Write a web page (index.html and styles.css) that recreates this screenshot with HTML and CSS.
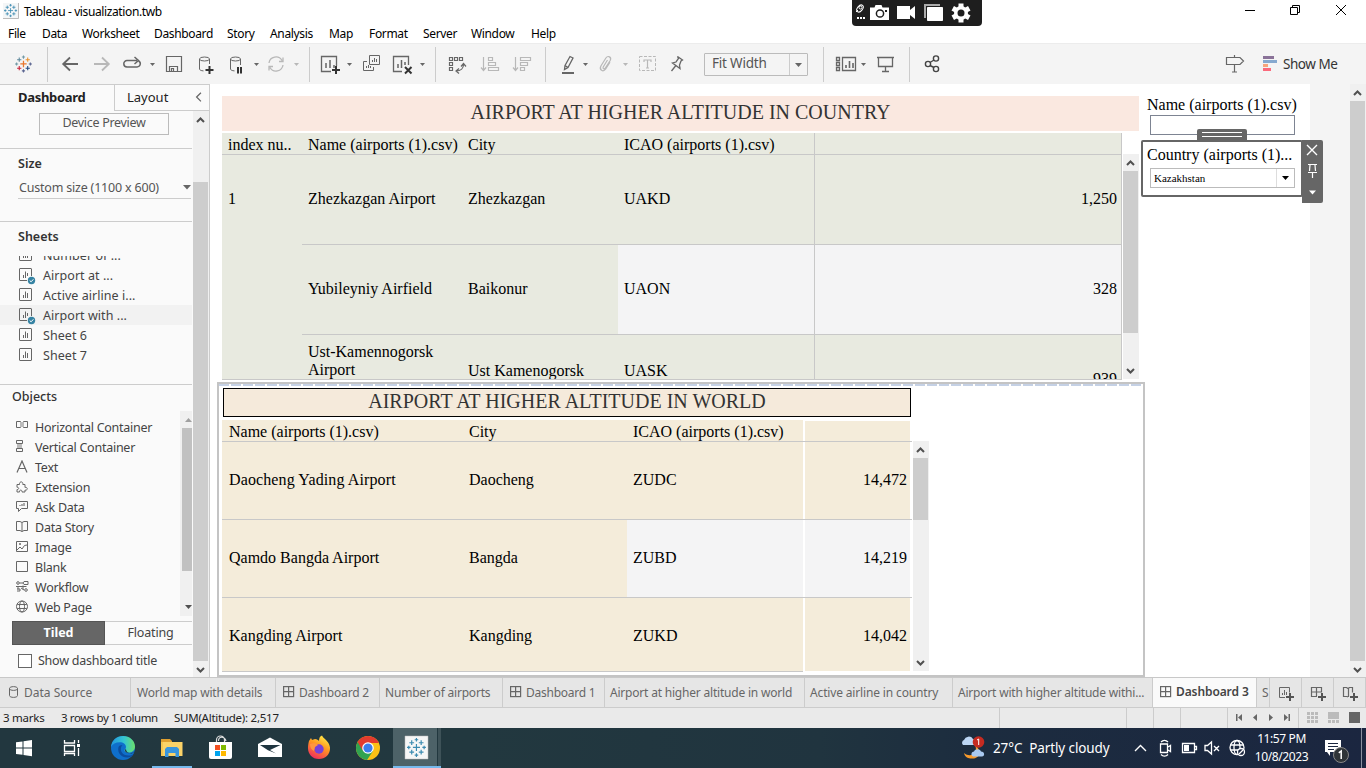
FILE: index.html
```html
<!DOCTYPE html>
<html lang="en">
<head>
<meta charset="utf-8">
<title>Tableau - visualization.twb</title>
<link rel="stylesheet" href="styles.css">
</head>
<body>
<svg class="defs" width="0" height="0">
  <defs>
    <g id="logo" fill="none">
      <path stroke="#e8762d" stroke-width="1.200" d="M8 5v6M5 8h6"/>
      <path stroke="#c72037" d="M4 10v4M2 12h4"/>
      <path stroke="#5b879b" d="M4 2v4M2 4h4"/>
      <path stroke="#eb912c" d="M12 2v4M10 4h4"/>
      <path stroke="#1f457e" d="M12 10v4M10 12h4"/>
      <path stroke="#7199a6" d="M8 0v3M6.500 1.500h3M1.500 6.500v3M0 8h3"/>
      <path stroke="#5b6591" d="M8 13v3M6.500 14.500h3M14.500 6.500v3M13 8h3"/>
    </g>
    <g id="logo-blue" fill="none" stroke="#3b8ab0">
      <path d="M8 5v6M5 8h6M4 10v4M2 12h4M4 2v4M2 4h4M12 2v4M10 4h4M12 10v4M10 12h4M8 0v3M6.500 1.500h3M1.500 6.500v3M0 8h3M8 13v3M6.500 14.500h3M14.500 6.500v3M13 8h3"/>
    </g>
    <path id="caret" d="M0 0h5l-2.500 3z"/>
    <g id="sheet" fill="none" stroke="#666"><rect x=".5" y=".5" width="12" height="12" rx=".5"/><path d="M4.500 10V7M6.500 10V3.500M8.500 10V5"/></g>
    <g id="placed"><path fill="none" stroke="#666" d="M8 12.500H1a.5.5 0 0 1-.5-.5V1a.5.5 0 0 1 .5-.5h11a.5.5 0 0 1 .5.5v7M4.500 10V7M6.500 10V3.500M8.500 8V5"/><circle cx="12.500" cy="12.500" r="3.700" fill="#3583a3"/><path d="M10.700 12.500l1.400 1.300 2.300-2.500" fill="none" stroke="#fff"/></g>
    <g id="grid" fill="none" stroke="#666" stroke-width="1.200"><rect x=".6" y=".6" width="10" height="10"/><path d="M5.600 0v11M0 5.600h11"/></g>
    <path id="up" fill="none" stroke="#505050" stroke-width="2" d="M4 10l3.500-3.500L11 10"/>
    <path id="down" fill="none" stroke="#505050" stroke-width="2" d="M4 6l3.500 3.500L11 6"/>
  </defs>
</svg>

<header class="titlebar">
  <svg width="16" height="16" viewBox="0 0 16 16"><path fill="#f4f6f7" d="M0 0h16v16H0z"/><path d="M15.500 0v15.500H0" fill="none" stroke="#bbb"/><g transform="translate(1 1) scale(.82)"><use href="#logo-blue"/></g></svg>
  <span class="app-name">Tableau - visualization.twb</span>
  <div class="recorder">
    <svg width="130" height="26" viewBox="852 0 130 26">
      <g fill="none" stroke="#fff"><ellipse cx="860" cy="8.500" rx="4" ry="2.500" transform="rotate(-50 860 8.500)"/><circle cx="860.500" cy="7.500" r="1.500"/><path d="M856 12l2-2"/></g>
      <path fill="#fff" d="M857 17h2v2h-2zM860 17h2v2h-2zM863 17h2v2h-2z"/>
      <path fill="#fff" d="M870 7.500h4.500l1-2.500h6l1 2.500h6.500V20h-19z"/><circle cx="880" cy="13.500" r="3.600" fill="#fff" stroke="#1e1e1e" stroke-width="1.500"/><path d="M885 10h2v2h-2z" fill="#1e1e1e"/>
      <path fill="#fff" d="M897 6h13v4l5-4v13l-5-4v4h-13z"/>
      <path fill="#aaa" d="M924 4h16v2h-14v12h-2z"/><path fill="#fff" stroke="#fff" d="M927.500 7.500h15v13h-15z"/>
      <g fill="#fff"><circle cx="961" cy="13" r="7"/><path d="M958.500 3.500h5v19h-5z"/><path d="M958.500 3.500h5v19h-5z" transform="rotate(60 961 13)"/><path d="M958.500 3.500h5v19h-5z" transform="rotate(120 961 13)"/></g><circle cx="961" cy="13" r="3.500" fill="#1e1e1e"/>
    </svg>
  </div>
  <svg class="window-buttons" width="116" height="22" viewBox="1240 0 116 22" fill="none" stroke="#000"><path d="M1245 10.500h10M1290.500 7.500h7v7h-7zM1292.500 7v-1.500h7v7h-2M1336 5l10 10M1346 5l-10 10"/></svg>
</header>

<nav class="menubar">
  <span class="m-file">File</span><span class="m-data">Data</span><span class="m-work">Worksheet</span><span class="m-dash">Dashboard</span><span class="m-story">Story</span><span class="m-ana">Analysis</span><span class="m-map">Map</span><span class="m-format">Format</span><span class="m-server">Server</span><span class="m-window">Window</span><span class="m-help">Help</span>
</nav>

<div class="toolbar">
  <svg width="47" height="40" viewBox="0 44 47 40"><g transform="translate(15 55.500) scale(1.060)"><use href="#logo"/></g></svg>
  <i class="sep"></i>
  <svg width="40" height="40" viewBox="48 44 40 40" class="ic"><path d="M63 64h15M70 57.500L63.200 64l6.800 6.500" stroke-width="1.800"/></svg>
  <svg width="30" height="40" viewBox="88 44 30 40" class="ic off"><path d="M94 64h15M102 57.500l6.800 6.500-6.800 6.500" stroke-width="1.800"/></svg>
  <svg width="40" height="40" viewBox="118 44 40 40" class="ic"><path d="M129 60.500h-2a3.200 3.200 0 0 0 0 6.400h10a3.200 3.200 0 0 0 1.800-5.900M128 60.500h9M134.500 57l4 3.500-4 3.500" stroke-width="1.500"/><use href="#caret" x="150" y="63" class="fill"/></svg>
  <svg width="32" height="40" viewBox="158 44 32 40" class="ic"><path d="M166.500 56.500h15v15h-15zM169.500 71v-4.500h8V71M171.500 71v-2.500h2V71" stroke-width="1.200"/></svg>
  <svg width="32" height="40" viewBox="190 44 32 40" class="ic"><ellipse cx="204.500" cy="59" rx="5" ry="2"/><path d="M199.500 59v10c0 1 1.500 1.700 4 1.900M209.500 59v5"/><path d="M209.500 66v8M205.500 70h8" class="dark"/></svg>
  <svg width="40" height="40" viewBox="222 44 40 40" class="ic"><ellipse cx="235.500" cy="59" rx="5" ry="2"/><path d="M230.500 59v10c0 1 1.500 1.700 4 1.900M240.500 59v6"/><path d="M238 67v6.500M241 67v6.500" class="dark"/><use href="#caret" x="254" y="63" class="fill"/></svg>
  <svg width="47" height="40" viewBox="262 44 47 40" class="ic off"><path d="M269 63a7 7 0 0 1 13-2.500M283 65a7 7 0 0 1-13 2.500M283 57.500v4h-4M269 70.500v-4h4" stroke-width="1.300"/><use href="#caret" x="294" y="63" class="fill"/></svg>
  <i class="sep"></i>
  <svg width="48" height="40" viewBox="310 44 48 40" class="ic"><path d="M331 71.500h-9.500v-15h15V66" stroke-width="1.300"/><path d="M326 68v-5M330 68v-8M334 68v-3" stroke-width="1.500"/><path d="M336 66v8M332 70h8" class="dark"/><use href="#caret" x="347" y="63" class="fill"/></svg>
  <svg width="28" height="40" viewBox="358 44 28 40" class="ic"><path d="M369.500 55.500h10v9h-10zM367 61.500h-3.500v9h10V67M372.500 62v-2M374.500 62v-4M376.500 62v-3M366.500 68v-2M368.500 68v-3M370.500 68v-2"/></svg>
  <svg width="49" height="40" viewBox="386 44 49 40" class="ic"><path d="M402 71.500h-8.500v-15h15V65" stroke-width="1.300"/><path d="M398 68v-4M401.500 68v-8M405 65v-3" stroke-width="1.500"/><path d="M405 67l6.500 6.500M411.500 67l-6.500 6.500" class="dark"/><use href="#caret" x="420" y="63" class="fill"/></svg>
  <i class="sep"></i>
  <svg width="38" height="40" viewBox="436 44 38 40" class="ic"><path d="M449.500 57.500h3v3h-3zM454.500 57.500h3v3h-3zM459.500 57.500h3v3h-3zM449.500 62.500h3v3h-3zM449.500 67.500h3v3h-3zM456 71c5 0 7.500-3 7.500-6.500M461 66.500l2.500-3 2.500 3M459 68.500l-3 2.500 3 2.500" stroke-width="1.200"/></svg>
  <svg width="32" height="40" viewBox="474 44 32 40" class="ic off"><path d="M483.500 57v13M481 67.500l2.500 3 2.500-3M488.500 57.500h4v3h-4zM488.500 62.500h7v3h-7zM488.500 67.500h10v3h-10z" stroke-width="1.200"/></svg>
  <svg width="39" height="40" viewBox="506 44 39 40" class="ic off"><path d="M515.500 57v13M513 67.500l2.500 3 2.500-3M520.500 57.500h10v3h-10zM520.500 62.500h7v3h-7zM520.500 67.500h4v3h-4z" stroke-width="1.200"/></svg>
  <i class="sep"></i>
  <svg width="46" height="40" viewBox="546 44 46 40" class="ic"><path d="M565 65.500l5-9 3 1.500-5 9.500-3.500 2zM565 65.500l3 2" stroke-width="1.300"/><path d="M562 73h12" stroke-width="2"/><use href="#caret" x="583" y="63" class="fill"/></svg>
  <svg width="40" height="40" viewBox="592 44 40 40" class="ic off"><path d="M607.500 60l-4.300 7c-.8 1.700 1.100 2.700 2.100 1.200l4.900-7.700c1.700-3.300-2.200-5.500-4.300-2.500l-5 8c-2 4 2.200 6.500 4.800 3l4.300-6.800" stroke-width="1.200"/><use href="#caret" x="623" y="63" class="fill"/></svg>
  <svg width="30" height="40" viewBox="632 44 30 40" class="ic off"><path d="M639.500 56.500h16v14h-16z" stroke-dasharray="3 1.500"/><path d="M644 62v-2h7v2M647.500 60v8M646 68h3" stroke-width="1.200"/></svg>
  <svg width="42" height="40" viewBox="662 44 42 40" class="ic"><path d="M677.500 56.500l5 3.500-1.500 1-1.500 4 .5 3.500-7.500-5.500 3.500-1 2.500-3.500zM675.500 66l-4 5" stroke-width="1.300"/></svg>
  <div class="fit"><span>Fit Width</span><i><svg width="17" height="20" viewBox="0 0 17 20"><path d="M5 9h7l-3.500 4z" fill="#666"/></svg></i></div>
  <i class="sep after-fit"></i>
  <svg width="46" height="40" viewBox="824 44 46 40" class="ic"><path d="M836.500 57.500h3v3h-3zM836.500 62.500h3v3h-3zM836.500 67.500h3v3h-3zM842.500 57.500h13v13h-13z" stroke-width="1.300"/><path d="M846 68v-3M849.500 68v-7M853 68v-5" stroke-width="1.600"/><use href="#caret" x="861" y="63" class="fill"/></svg>
  <svg width="39" height="40" viewBox="870 44 39 40" class="ic"><path d="M877 57.500h17M878.500 58v8.500h14V58M885.500 66v5.500M882 71.500h7" stroke-width="1.300"/></svg>
  <i class="sep"></i>
  <svg width="50" height="40" viewBox="910 44 50 40" class="ic"><g stroke-width="1.400" class="share"><circle cx="928" cy="64" r="2.600"/><circle cx="936" cy="58.500" r="2.600"/><circle cx="936" cy="69" r="2.600"/><path d="M930 62.500l4-2.500M930 65.500l4 2"/></g></svg>
  <svg class="guide" width="30" height="40" viewBox="1220 44 30 40"><path fill="none" stroke="#666" stroke-width="1.200" d="M1226.500 57.500h13.500l3.500 3.500-3.500 3.500h-13.500zM1234.500 55v2.500M1234.500 64.500V72M1232 72h5"/></svg>
  <svg class="show-icon" width="14" height="40" viewBox="1263 44 14 40"><path fill="#8a7298" d="M1263 56h11v3h-11z"/><path fill="#86a9cf" d="M1263 60h14v3h-14z"/><path fill="#f7a57c" d="M1263 64h5v3h-5z"/><path fill="#fb6a7c" d="M1263 68h8v3h-8z"/></svg>
  <span class="show-me">Show Me</span>
</div>

<main class="workspace">
  <aside class="sidebar">
    <div class="side-tabs"><b>Dashboard</b><span class="layout-tab">Layout</span><svg width="18" height="26" viewBox="190 84 18 26"><path d="M201 92l-4.500 4.500 4.500 4.500" fill="none" stroke="#666" stroke-width="1.300"/></svg></div>
    <div class="side-body">
      <div class="side-content">
        <section class="preview"><div class="preview-button">Device Preview</div></section>
        <section class="size"><h3>Size</h3><div class="size-box"><span>Custom size (1100 x 600)</span><svg width="8" height="5"><path d="M0 0h8l-4 4.500z" fill="#666"/></svg></div></section>
        <section class="sheets"><h3>Sheets</h3>
          <ul>
            <li><svg width="18" height="17"><use href="#sheet"/></svg>Number of ...</li>
            <li><svg width="18" height="17"><use href="#placed"/></svg>Airport at ...</li>
            <li><svg width="18" height="17"><use href="#sheet"/></svg>Active airline i...</li>
            <li class="selected"><svg width="18" height="17"><use href="#placed"/></svg>Airport with ...</li>
            <li><svg width="18" height="17"><use href="#sheet"/></svg>Sheet 6</li>
            <li><svg width="18" height="17"><use href="#sheet"/></svg>Sheet 7</li>
          </ul>
        </section>
        <section class="objects"><h3>Objects</h3>
          <div class="object-box">
            <ul>
              <li><svg width="13" height="13"><path d="M.5 1.500h4v6h-4zM7.500 1.500h4v6h-4z"/><path fill="#bbb" stroke="none" d="M4 2h4v5H4z"/></svg>Horizontal Container</li>
              <li><svg width="13" height="13"><path d="M.5.500h6v3h-6zM.5 8.500h6v3h-6zM1 6h5" /><path fill="#bbb" stroke="none" d="M1 4h5v4H1z"/></svg>Vertical Container</li>
              <li><svg width="13" height="13"><path d="M1 12.500L6 1l5 11.500M3 8.500h6" stroke-width="1.200"/></svg>Text</li>
              <li><svg width="13" height="13"><path d="M1 4.500h2.500C3 1 7.500 1 6.800 4.500H9v3c3-1 3 3.500 0 2.500v2H6c.5-2.500-3-2.500-2.500 0H1V9.500c2.200.3 2.200-2.500 0-2.200z"/></svg>Extension</li>
              <li><svg width="13" height="13"><path d="M.5 1.500h11v7h-6l-3 3v-3h-2z"/><path fill="#aaa" stroke="none" d="M3 5h2V4h2V3h2v3H3z"/></svg>Ask Data</li>
              <li><svg width="13" height="13"><path d="M6 2.500L4 1.500H.500v9H4l2 1 2-1h3.500v-9H8zM6 2.500v9"/></svg>Data Story</li>
              <li><svg width="13" height="13"><path d="M.5 1.500h11v10H.500zM1 10l3-3 2 2 2.500-3.500L11 5"/><circle cx="4" cy="4" r="1" fill="#666" stroke="none"/></svg>Image</li>
              <li><svg width="13" height="13"><path d="M.5 1.500h11v10H.500z"/></svg>Blank</li>
              <li><svg width="13" height="13"><circle cx="2" cy="3" r="1.300"/><circle cx="10" cy="10" r="1.300"/><path d="M3.500 3H7l1-1.500h4v3H8L7 3M0 6.500h10.500M2 6.500v3M1 11h3v-2H1M5 8l3 2M7 5.500v4"/></svg>Workflow</li>
              <li><svg width="13" height="13"><circle cx="6" cy="6.500" r="5.500"/><ellipse cx="6" cy="6.500" rx="2.500" ry="5.500"/><path d="M1.200 4.500h9.600M1.200 8.500h9.600"/></svg>Web Page</li>
            </ul>
            <div class="mini-scroll"><svg width="13" height="17"><path d="M5 11h7L8.500 7z" fill="#a0a0a0"/></svg><i></i><svg width="13" height="17"><path d="M5 6h7L8.500 10z" fill="#505050"/></svg></div>
          </div>
          <div class="mode"><b>Tiled</b><span>Floating</span></div>
          <label class="show-title"><i></i>Show dashboard title</label>
        </section>
      </div>
      <div class="scroll side-scroll"><svg width="15" height="17"><use href="#up" y="1"/></svg><i></i><svg width="15" height="16"><use href="#down" y="1"/></svg></div>
    </div>
  </aside>

  <div class="canvas">
    <div class="dashboard">
      <div class="worksheets">
        <h2 class="country-title">AIRPORT AT HIGHER ALTITUDE IN COUNTRY</h2>
        <div class="country">
          <div class="country-table">
            <div class="c-head"><span>index nu..</span><span>Name (airports (1).csv)</span><span>City</span><span>ICAO (airports (1).csv)</span><span class="val"></span></div>
            <div class="c-body">
              <div class="c-index">1</div>
              <div class="c-rows">
                <div class="c-row"><span>Zhezkazgan Airport</span><span>Zhezkazgan</span><span>UAKD</span><span class="val">1,250</span></div>
                <div class="c-row banded"><span>Yubileyniy Airfield</span><span>Baikonur</span><span>UAON</span><span class="val">328</span></div>
                <div class="c-row last"><span class="two-line">Ust-Kamennogorsk<br>Airport</span><span>Ust Kamenogorsk</span><span>UASK</span><span class="val">939</span></div>
              </div>
            </div>
          </div>
          <div class="scroll country-scroll"><svg width="15" height="17"><use href="#up" y="1"/></svg><i></i><svg width="15" height="17"><use href="#down" y="1"/></svg></div>
        </div>
        <div class="world">
          <div class="grip"></div>
          <h2 class="world-title">AIRPORT AT HIGHER ALTITUDE IN WORLD</h2>
          <div class="world-body">
            <div class="world-table">
              <div class="w-row w-head"><span>Name (airports (1).csv)</span><span>City</span><span>ICAO (airports (1).csv)</span><span class="val"></span></div>
              <div class="w-row"><span class="wide">Daocheng Yading Airport</span><span>Daocheng</span><span>ZUDC</span><span class="val">14,472</span></div>
              <div class="w-row banded"><span>Qamdo Bangda Airport</span><span>Bangda</span><span>ZUBD</span><span class="val">14,219</span></div>
              <div class="w-row w-last"><span>Kangding Airport</span><span>Kangding</span><span>ZUKD</span><span class="val">14,042</span></div>
            </div>
            <div class="scroll world-scroll"><svg width="15" height="17"><use href="#up" y="1"/></svg><i></i><svg width="15" height="17"><use href="#down" y="1"/></svg></div>
          </div>
        </div>
      </div>
      <div class="filters">
        <label>Name (airports (1).csv)</label>
        <div class="name-input"></div>
        <div class="country-filter">
          <svg class="handle" width="50" height="12"><path fill="#666" d="M2 0h46a2 2 0 0 1 2 2v10H0V2a2 2 0 0 1 2-2z"/><path d="M5 3.500h40M5 7.500h40" stroke="#fff"/></svg>
          <label>Country (airports (1)...</label>
          <div class="country-select"><span>Kazakhstan</span><i><svg width="17" height="18"><path d="M5 7h7l-3.500 4z"/></svg></i></div>
          <svg class="side-actions" width="21" height="63" viewBox="1302 140 21 63"><path fill="#666" d="M1302 140h19a2 2 0 0 1 2 2v59a2 2 0 0 1-2 2h-19z"/><path fill="none" stroke="#fff" stroke-width="1.400" d="M1307 145l10 10M1317 145l-10 10"/><path fill="none" stroke="#fff" stroke-width="1.200" d="M1308 164.500h9M1310 165l-.5 6M1315 165l.5 6M1308 172.500h9M1312.500 173v5"/><path fill="#fff" d="M1309 190.500h7l-3.500 4z"/></svg>
        </div>
      </div>
    </div>
    <div class="scroll page-scroll"><svg width="15" height="17"><use href="#up" y="1"/></svg><i></i><svg width="15" height="16"><use href="#down" y="1"/></svg></div>
  </div>
</main>

<div class="tabs">
  <span class="t-source"><svg width="10" height="12"><path d="M.5 2.500v7c0 2.500 8 2.500 8 0v-7M.5 2.500c0-2.500 8-2.500 8 0s-8 2.500-8 0z" fill="none" stroke="#666"/></svg>Data Source</span>
  <span class="t-map">World map with details</span>
  <span class="t-d2"><svg width="12" height="12"><use href="#grid"/></svg>Dashboard 2</span>
  <span class="t-num">Number of airports</span>
  <span class="t-d1"><svg width="12" height="12"><use href="#grid"/></svg>Dashboard 1</span>
  <span class="t-high">Airport at higher altitude in world</span>
  <span class="t-active">Active airline in country</span>
  <span class="t-with">Airport with higher altitude withi...</span>
  <span class="t-d3"><svg width="12" height="12"><use href="#grid"/></svg>Dashboard 3</span>
  <span class="t-s">S</span>
  <span class="t-new"><svg width="31" height="29" viewBox="1270 678 31 29"><path d="M1285 697.500h-5.500v-10h10v5M1282.500 695v-2M1284.500 695v-5M1286.500 695v-3" stroke="#666"/><path d="M1290 693v8M1286 697h8" stroke="#555" stroke-width="2"/></svg></span>
  <span class="t-new"><svg width="31" height="29" viewBox="1302 678 31 29"><path d="M1317 696.500h-5.500v-9h10v5M1311 692h11M1316.500 687v9" stroke="#666" stroke-width="1.200"/><path d="M1322 693v8M1318 697h8" stroke="#555" stroke-width="2"/></svg></span>
  <span class="t-new"><svg width="31" height="29" viewBox="1334 678 31 29"><path d="M1348 697l-1-.5h-3.500v-9h3l1.500 1 1.500-1h3v5M1348.500 688v9" stroke="#666" stroke-width="1.200"/><path d="M1354 693v8M1350 697h8" stroke="#555" stroke-width="2"/></svg></span>
</div>

<footer class="status">
  <span class="s-marks">3 marks</span><span class="s-rows">3 rows by 1 column</span><span class="s-sum">SUM(Altitude): 2,517</span>
  <svg width="367" height="20" viewBox="999 708 367 20"><path stroke="#ccc" d="M999.500 708v20M1126.500 708v20M1153.500 708v20M1180.500 708v20M1227.500 708v20M1298.500 708v20"/><path fill="#666" d="M1236 714h1.500v7h-1.500zM1242 714v7l-4-3.500zM1257 714v7l-4-3.500zM1269 714v7l4-3.500zM1284 714v7l4-3.500zM1288.500 714h1.500v7h-1.500z"/><path fill="#bbb" d="M1307 712h3v3h-3zM1311 712h3v3h-3zM1315 712h3v3h-3zM1307 716h3v3h-3zM1311 716h3v3h-3zM1315 716h3v3h-3zM1307 720h3v3h-3zM1311 720h3v3h-3zM1315 720h3v3h-3zM1328 712h11v7h-11zM1328 720h3v3h-3zM1332 720h3v3h-3zM1336 720h3v3h-3z"/><path fill="#666" d="M1349 712h11v11h-11z"/></svg>
</footer>

<div class="taskbar">
  <svg width="48" height="40" viewBox="0 728 48 40"><path fill="#fff" d="M16 742.300l6.500-.9v6.200H16zM23.500 741.200l8.500-1.200v7.600h-8.500zM16 748.600h6.500v6.200l-6.500-.9zM23.500 748.600H32v7.600l-8.500-1.200z"/></svg>
  <svg width="48" height="40" viewBox="48 728 48 40"><path fill="none" stroke="#fff" stroke-width="1.300" d="M64.500 740v3h10v-3M64.500 745.500h10v6h-10zM64.500 756v-2.500h10v2.500M78.500 740v3M78.500 748v8"/><path fill="#fff" d="M77 744h3v3h-3z"/></svg>
  <svg width="56" height="40" viewBox="96 728 56 40">
    <defs><linearGradient id="eg" x1="0" y1="0" x2="1" y2="0"><stop offset="0" stop-color="#2196e0"/><stop offset=".55" stop-color="#36c6d0"/><stop offset="1" stop-color="#6be06a"/></linearGradient></defs>
    <circle cx="123" cy="748" r="12" fill="#0f6fcb"/><path fill="url(#eg)" d="M111 747c.5-6.500 5.500-11 12-11 7 0 12 5 12 10.500 0 4-3 6-6.500 6-2.500 0-4-1-4-2s1.500-1.500 1.500-3.500c0-3-3-4.800-6-4.800-4.500 0-7.500 2-9 4.800z"/><path fill="#0b4d9e" d="M118.500 747c-1.500 6 3 10.500 8.500 10.500 3 0 5.500-1.500 6.500-3-1 .5-3 1-5 1-5 0-8.500-3.500-7.500-8 .3-1.200 1-2 1.500-2.500-2 0-3.500.7-4 2z"/><path fill="#22373f" d="M135 751.500c-2 1.700-4.500 2-7 1.500-2-.4-3-1.600-3-2.500 0-.6.500-1 .9-1.700.3 4.200 5 6.700 9.100 2.700z"/>
  </svg>
  <svg width="40" height="40" viewBox="152 728 40 40"><path fill="#e0a030" d="M161 739h9l2 2v4h-11z"/><path fill="#fbd368" d="M161 742h21.500v14H161z"/><path fill="#f7c650" d="M161 742h2v14h-2z"/><path fill="#3a96dd" d="M165 749l2-2h10l2 2v8h-3.500v-4h-7v4H165z"/><path fill="#76b9ed" d="M152 766h40v2h-40z"/></svg>
  <svg width="52" height="40" viewBox="192 728 52 40"><path fill="none" stroke="#ddd" stroke-width="1.200" d="M216.500 742v-2a4 4 0 0 1 8 0v2M218.500 741c0-5 6-5 7.500 0"/><path fill="#fff" d="M209 742h23v15a2 2 0 0 1-2 2h-19a2 2 0 0 1-2-2z"/><path fill="#f25022" d="M215 745h5v5h-5z"/><path fill="#7fba00" d="M221 745h5v5h-5z"/><path fill="#00a4ef" d="M215 751h5v5h-5z"/><path fill="#ffb900" d="M221 751h5v5h-5z"/></svg>
  <svg width="50" height="40" viewBox="244 728 50 40"><path fill="#fff" d="M258 744l12-6.500 12 6.500v13h-24z"/><path fill="#1f3540" d="M260 745h20.500l-10.500 5 6 3.500-8-3.300z"/></svg>
  <svg width="50" height="40" viewBox="294 728 50 40"><defs><linearGradient id="ff" x1=".8" y1="0" x2=".3" y2="1"><stop offset="0" stop-color="#fff04a"/><stop offset=".45" stop-color="#ff9a20"/><stop offset="1" stop-color="#f22a5e"/></linearGradient></defs><path fill="url(#ff)" d="M309 741l2-3 1 2 3-1c2 0 3 1 4 2 0-3 1-5 3-5.500 1 3 7 5 8 12 .5 7-5 11.500-11 11.500-7 0-11-5-11-11 0-2.500.5-5 1-7z"/><circle cx="319" cy="749" r="4.700" fill="#7741d8"/><path fill="#ff9640" d="M310 744c3-1 6-1 8 1l-3 2-1 4c-2-1-4-3-4-7z"/></svg>
  <svg width="49" height="40" viewBox="344 728 49 40"><circle cx="368" cy="748" r="12" fill="#fbc116"/><path fill="#e33b2e" d="M357.600 742A12 12 0 0 1 378.400 742H368z"/><path fill="#31a350" d="M357.600 742A12 12 0 0 0 367 760l6-9h-5z"/><path fill="#e33b2e" d="M357.600 742l5 8.500L368 743h10.800l-.4-1z"/><circle cx="368" cy="748" r="5.800" fill="#fff"/><circle cx="368" cy="748" r="4.600" fill="#3b7ded"/></svg>
  <svg width="48" height="40" viewBox="393 728 48 40"><path fill="#4d6268" d="M393 728h44v40h-44z"/><path fill="#3e5258" d="M438 728h3v40h-3z"/><path fill="#76b9ed" d="M393 766h48v2h-48z"/><path fill="#f6f6f6" stroke="#bbb" stroke-width=".5" d="M405 736h23v23h-23z"/><g transform="translate(407 738) scale(1.180)"><use href="#logo-blue"/></g></svg>
  <svg class="weather-icon" width="30" height="40" viewBox="958 728 30 40"><path fill="#f79a2c" d="M975 745c4 9-5 13-11 8 1 5 6 6 9 5.500 6 0 10-7 2-13.500z"/><path fill="#bcd6f4" d="M963 745a3 3 0 0 1 1-5 5 5 0 0 1 9-1c4 0 5 6 1 6z"/><path fill="#a9c9f0" d="M973 756.500c-3-2-1-5 1-5 1-3 6-3 7 0 4 0 4 5 1 5z"/><circle cx="978.500" cy="742" r="5.800" fill="#c52b21"/><path d="M977 740l1.700-1v6" fill="none" stroke="#fff"/></svg>
  <span class="weather">27°C&nbsp; Partly cloudy</span>
  <svg width="118" height="40" viewBox="1130 728 118 40" fill="none" stroke="#fff" stroke-width="1.300"><path d="M1135 751l5.500-5.500 5.500 5.500M1160.500 744h7v8.500h-7zM1168 747l2.500-1.500v6l-2.500-1.500M1161 742c2-2 5-2 7 0M1161 754.500c2 2 5 2 7 0M1182.500 743.500h12v9h-12zM1195 746.500h1.500v3h-1.500M1205 745.500h2.500l4-3.500v12l-4-3.500h-2.500zM1214 746l5 5M1219 746l-5 5"/><path fill="#fff" stroke="none" d="M1184 745h5v6h-5z"/><circle cx="1237" cy="747.500" r="7"/><ellipse cx="1237" cy="747.500" rx="3" ry="7"/><path d="M1230.500 745h13M1230.500 750h8M1239 753l4-4"/><circle cx="1241" cy="752" r="3.500" fill="#1b263f"/><path d="M1239 754l4-4"/></svg>
  <div class="clock"><span>11:57 PM</span><span>10/8/2023</span></div>
  <svg class="notice" width="48" height="40" viewBox="1318 728 48 40"><path fill="#fff" d="M1325 740h16v12h-11v4l-3-4h-2z"/><path stroke="#1b263f" stroke-width="1.200" d="M1328 743.500h10M1328 746.500h10M1328 749.500h6"/><circle cx="1341" cy="755" r="7.500" fill="#2f3438" stroke="#888"/><path d="M1338.800 752.800l2.400-1.800v8" fill="none" stroke="#fff" stroke-width="1.500"/><path stroke="#8a90a0" d="M1361.500 728v40"/></svg>
</div>
</body>
</html>
```
FILE: styles.css
```css
* { box-sizing: border-box; }
body { margin: 0; width: 1366px; height: 768px; overflow: hidden; display: flex; flex-direction: column; background: #fff; font-family: "Noto Sans", sans-serif; font-size: 12px; color: #000; white-space: nowrap; }
svg { display: block; flex: none; }
.defs { position: absolute; }
h2, h3, ul { margin: 0; padding: 0; font-weight: normal; list-style: none; }
i { font-style: normal; }

.titlebar { height: 22px; flex: none; display: flex; align-items: center; padding-left: 3px; position: relative; }
.app-name { margin-left: 5px; letter-spacing: -.38px; }
.recorder { position: absolute; left: 852px; top: 0; width: 130px; height: 26px; background: #1e1e1e; border-radius: 0 0 4px 4px; z-index: 2; }
.window-buttons { margin-left: auto; margin-right: 10px; }

.menubar { height: 21px; flex: none; display: flex; padding-left: 8px; line-height: 23px; letter-spacing: -.35px; }
.m-file { width: 34px; } .m-data { width: 40px; } .m-work { width: 72px; } .m-dash { width: 73px; }
.m-story { width: 43px; } .m-ana { width: 59px; } .m-map { width: 40px; } .m-format { width: 54px; }
.m-server { width: 48px; } .m-window { width: 60px; }

.toolbar { height: 41px; flex: none; display: flex; align-items: center; background: #f4f4f4; border-top: 1px solid #ececec; }
.sep { width: 1px; height: 35px; background: #ccc; flex: none; }
.ic { fill: none; stroke: #666; color: #666; }
.off { stroke: #b8b8b8; color: #b8b8b8; }
.share { stroke: #444; }
.fill { fill: currentColor; stroke: none; }
.dark { stroke: #333; stroke-width: 2; }
.fit { width: 104px; height: 23px; border: 1px solid #bbb; border-radius: 1px; display: flex; align-items: center; font-size: 13.500px; color: #555; padding-left: 7px; letter-spacing: -.2px; line-height: 19px; }
.fit span { padding-bottom: 1px; }
.fit i { margin-left: auto; border-left: 1px solid #ccc; height: 21px; }
.after-fit { margin-left: 15px; }
.guide { margin-left: auto; margin-right: 13px; }
.show-me { margin: 0 29px 0 6px; width: 54px; font-size: 13.500px; letter-spacing: -.45px; color: #333; padding-bottom: 1px; }

.workspace { height: 593px; flex: none; display: flex; }
.sidebar { width: 210px; flex: none; background: #fafafa; border-top: 1px solid #ccc; border-right: 1px solid #ccc; display: flex; flex-direction: column; color: #444; font-size: 12.500px; }
.side-tabs { height: 26px; display: flex; line-height: 25px; color: #222; font-size: 13px; flex: none; }
.side-tabs b { width: 114px; padding-left: 18px; letter-spacing: -.3px; }
.side-tabs svg { border-bottom: 1px solid #ccc; width: 20px; }
.layout-tab { width: 75px; padding-left: 12px; border-left: 1px solid #ccc; border-bottom: 1px solid #ccc; }
.side-body { flex: 1; display: flex; min-height: 0; }
.side-content { width: 192px; }
.side-content section { border-bottom: 1px solid #ccc; }
.side-content h3 { font-size: 12.500px; font-weight: 600; color: #333; line-height: 18px; padding-left: 18px; }
.side-content .preview { height: 38px; padding: 2px 0 0 39px; }
.preview-button { width: 130px; height: 22px; border: 1px solid #bbb; text-align: center; line-height: 18px; color: #555; letter-spacing: -.3px; }
.side-content .size { height: 73px; padding-top: 6px; }
.size-box { display: flex; align-items: center; justify-content: space-between; margin: 4px 1px 0 18px; height: 22px; border-bottom: 1px solid #ccc; color: #555; letter-spacing: -.2px; padding-left: 1px; }
.side-content .sheets { height: 163px; padding-top: 6px; }
.sheets ul { margin-top: 10px; height: 110px; overflow: hidden; }
.sheets li { height: 20px; line-height: 21px; display: flex; padding-left: 19px; letter-spacing: .05px; }
.sheets li:first-child { margin-top: -11px; }
.sheets li svg { margin: 3px 6px 0 0; }
.selected { background: #f2f2f2; }
.side-content .objects { border: 0; padding-top: 3px; }
.objects h3 { padding-left: 12px; font-weight: 500; }
.object-box { height: 205px; margin-top: 5px; display: flex; justify-content: space-between; }
.object-box ul { padding-top: 6px; }
.object-box li { height: 20px; line-height: 21px; display: flex; padding-left: 16px; letter-spacing: -.25px; }
.object-box li svg { margin: 3px 6px 0 0; fill: none; stroke: #666; }
.mini-scroll { width: 12px; background: #f0f0f0; overflow: hidden; }
.mini-scroll i { display: block; height: 143px; margin-left: 2px; background: #c1c1c1; }
.mini-scroll svg:last-child { margin-top: 28px; }
.mode { display: flex; height: 24px; margin: 5px 0 0 12px; line-height: 22px; text-align: center; }
.mode b { width: 93px; background: #666; color: #fff; border: 1px solid #555; }
.mode span { flex: 1; border: 1px solid #ccc; border-width: 1px 0; padding-left: 4px; letter-spacing: -.15px; }
.show-title { display: flex; align-items: center; padding-left: 18px; height: 31px; letter-spacing: -.25px; }
.show-title i { width: 14px; height: 14px; border: 1px solid #666; background: #fff; margin-right: 6px; }

.scroll { width: 16px; background: #f0f0f0; display: flex; flex-direction: column; flex: none; }
.scroll i { display: block; width: 15px; background: #cdcdcd; }
.side-scroll { margin-left: 1px; }
.side-scroll i { margin-top: 54px; flex: 1; }

.canvas { flex: 1; display: flex; background: #f4f4f4; min-width: 0; }
.dashboard { width: 1100px; background: #fff; display: flex; padding-top: 12px; font-family: "Liberation Serif", serif; font-size: 16px; }
.worksheets { width: 935px; padding-left: 7px; flex: none; }
.country-title { margin-left: 5px; width: 917px; height: 35px; background: #fae8e0; text-align: center; line-height: 32px; font-size: 20px; color: #333; }
.country { display: flex; margin: 2px 0 0 5px; height: 247px; }
.country-table { width: 900px; background: #e8eae0; border-right: 1px solid #c8c8c8; border-bottom: 1px solid #c8c8c8; overflow: hidden; }
.c-head { display: grid; grid-template-columns: 80px 160px 156px 196px 1fr; grid-template-rows: 21px; height: 22px; border-bottom: 1px solid #c8c8c8; line-height: 24px; }
.c-head span, .c-row span, .c-index { padding-left: 6px; }
.c-body { display: flex; }
.c-index { width: 80px; line-height: 88px; }
.c-rows { flex: 1; }
.c-row { display: grid; grid-template-columns: 160px 156px 196px 1fr; height: 90px; line-height: 88px; border-bottom: 1px solid #c8c8c8; }
.c-row .val, .c-head .val { border-left: 1px solid #c8c8c8; text-align: right; padding-right: 4px; }
.c-row.banded span:nth-child(n+3) { background: #f4f4f5; }
.c-row.last { line-height: 72px; }
.c-row.last .val { line-height: 88px; }
.c-row .two-line { line-height: 18px; padding-top: 8px; }
.country-scroll { margin: 21px 0 0 1px; height: 225px; }
.country-scroll i { height: 162px; margin-bottom: 29px; }

.world { width: 928px; height: 295px; margin-top: 2px; border: 2px solid #c4c4c4; }
.grip { height: 2px; margin-right: 2px; background: repeating-linear-gradient(90deg, #c5d1e5 0 10px, #fff 10px 12px); }
.world-title { width: 688px; height: 29px; margin: 2px 0 0 4px; border: 1px solid #000; background: #f5eadb; text-align: center; line-height: 24px; font-size: 20px; color: #333; }
.world-body { display: flex; margin: 3px 0 0 3px; }
.world-table { width: 690px; }
.w-row { display: grid; grid-template-columns: 241px 164px 176px 1fr; grid-template-rows: 77px; height: 78px; line-height: 76px; border-bottom: 1px solid #c8c8c8; }
.w-row span { background: #f4ecda; padding-left: 6px; }
.w-row span:first-child { padding-left: 7px; }
.w-row .val { margin: 0 2px; text-align: right; padding-right: 3px; }
.w-row .wide { letter-spacing: .12px; }
.w-row.w-head { height: 22px; line-height: 24px; grid-template-rows: 21px; }
.w-head .val { border-top: 1px solid #fff; }
.w-row.banded span:nth-child(n+3) { background: #f4f4f5; }
.w-row.w-last { height: 74px; border: 0; grid-template-rows: 74px; }
.w-last span:not(.val) { border-bottom: 1px solid #c8c8c8; }
.w-last .val { height: 73px; }
.world-scroll { margin: 21px 0 0 1px; height: 230px; }
.world-scroll i { height: 62px; margin-bottom: 134px; }

.filters { width: 165px; flex: none; padding-left: 2px; }
.filters label { display: block; line-height: 18px; height: 19px; }
.name-input { width: 145px; height: 20px; border: 1px solid #7d8492; margin-left: 3px; }
.country-filter { position: relative; width: 162px; height: 57px; margin: 5px 0 0 -6px; border: 2px solid #666; background: #fff; padding: 4px 0 0 4px; border-radius: 2px; }
.country-filter label { height: 22px; }
.handle { position: absolute; left: 54px; top: -13px; }
.side-actions { position: absolute; left: 159px; top: -2px; }
.country-select { width: 145px; height: 20px; border: 1px solid #bbb; margin-left: 3px; display: flex; align-items: center; font-size: 11px; padding-left: 3px; }
.country-select i { margin-left: auto; border-left: 1px solid #ddd; }
.page-scroll { margin-left: 40px; }
.page-scroll i { flex: 1; }

.tabs { height: 31px; flex: none; display: flex; background: #e6e6e6; border-top: 1px solid #c8c8c8; border-bottom: 1px solid #ccc; color: #666; font-size: 12px; line-height: 29px; letter-spacing: -.2px; }
.tabs > span { border-right: 1px solid #ccc; flex: none; display: flex; padding-left: 6px; overflow: hidden; }
.tabs > span > svg { margin: 8px 4px 0 2px; }
.tabs .t-source { width: 131px; padding-left: 7px; letter-spacing: 0; }
.tabs .t-source svg { margin-right: 5px; }
.t-map { width: 145px; } .tabs .t-d2 { width: 104px; padding-left: 5px; }
.tabs .t-num { width: 123px; padding-left: 5px; } .tabs .t-d1 { width: 102px; padding-left: 5px; letter-spacing: -.25px; }
.tabs .t-high { width: 200px; padding-left: 5px; } .tabs .t-active { width: 148px; padding-left: 5px; letter-spacing: -.15px; } .tabs .t-with { width: 200px; padding-left: 5px; }
.tabs .t-d3 { width: 104px; padding-left: 5px; background: #fafafa; color: #444; font-weight: 600; line-height: 27px; letter-spacing: -.1px; }
.tabs .t-s { width: 13px; padding-left: 5px; }
.tabs .t-new { width: 32px; padding: 0; }
.tabs .t-new svg { margin: 0; fill: none; }

.status { height: 20px; flex: none; display: flex; background: #eaeaea; line-height: 19px; font-size: 11.500px; color: #222; padding-left: 3px; }
.s-marks { width: 58px; letter-spacing: -.25px; } .s-rows { width: 113px; letter-spacing: -.4px; } .s-sum { letter-spacing: -.25px; }
.status svg { margin-left: auto; }

.taskbar { height: 40px; flex: none; display: flex; background: linear-gradient(90deg, #22373f 0, #22383f 35%, #20343f 60%, #1c2c3f 72%, #1b2640 100%); color: #fff; }
.weather-icon { margin-left: 517px; }
.weather { width: 137px; padding-left: 5px; margin-right: 5px; line-height: 40px; font-size: 13.500px; letter-spacing: -.1px; }
.clock { width: 70px; display: flex; flex-direction: column; align-items: center; line-height: 18px; padding-top: 2px; padding-right: 3px; letter-spacing: -.4px; }
```
